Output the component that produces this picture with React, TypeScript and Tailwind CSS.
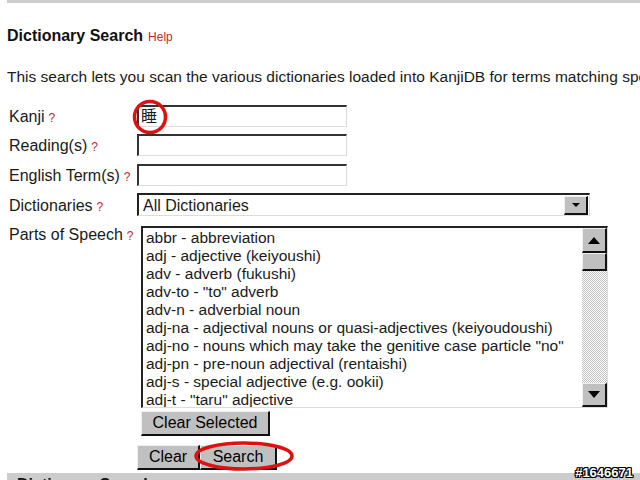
import React from 'react';

const partsOfSpeech = [
  'abbr - abbreviation',
  'adj - adjective (keiyoushi)',
  'adv - adverb (fukushi)',
  'adv-to - "to" adverb',
  'adv-n - adverbial noun',
  'adj-na - adjectival nouns or quasi-adjectives (keiyoudoushi)',
  'adj-no - nouns which may take the genitive case particle "no"',
  'adj-pn - pre-noun adjectival (rentaishi)',
  'adj-s - special adjective (e.g. ookii)',
  'adj-t - "taru" adjective',
];

function Q() {
  return <span className="text-[12px] text-[#c62828] ml-[4px]">?</span>;
}

function Label({ text }: { text: string }) {
  return (
    <div className="w-[137px] shrink-0 pl-[9px] pt-[3px] text-[16px] leading-[18px] text-[#1a1a1a] whitespace-nowrap">
      {text}
      <Q />
    </div>
  );
}

function TextBox({ value }: { value?: string }) {
  return (
    <div className="w-[210px] h-[22px] border-t-2 border-l-2 border-t-[#333] border-l-[#333] border-r border-b border-r-[#dcdcdc] border-b-[#dcdcdc] bg-white pl-[2px] text-[16px] leading-[19px] font-[family-name:Liberation_Sans,Noto_Sans_CJK_JP,sans-serif]">
      {value}
    </div>
  );
}

function ClassicButton({ children, className = '' }: { children: React.ReactNode; className?: string }) {
  return (
    <div
      className={
        'h-[25px] bg-[#c0c0c0] border-t border-l border-t-[#f0f0f0] border-l-[#f0f0f0] border-r-2 border-b-2 border-r-[#111] border-b-[#111] flex items-center justify-center text-[16px] text-black whitespace-nowrap ' +
        className
      }
    >
      {children}
    </div>
  );
}

function Arrow({ dir }: { dir: 'up' | 'down' }) {
  return (
    <svg width="12" height="7" viewBox="0 0 12 7">
      {dir === 'up' ? <polygon points="6,0 12,7 0,7" fill="#000" /> : <polygon points="0,0 12,0 6,7" fill="#000" />}
    </svg>
  );
}

export default function App() {
  return (
    <div className="relative w-[640px] h-[480px] overflow-hidden bg-white font-[family-name:Liberation_Sans,Arial,sans-serif] text-[#1a1a1a]">
      {/* top bar */}
      <div className="ml-[7px] h-[3px] bg-[#cccccc]" />

      {/* heading */}
      <div className="mt-[24px] pl-[7px] h-[18px] leading-[18px] whitespace-nowrap">
        <span className="text-[16px] font-bold text-[#111]">Dictionary Search</span>
        <span className="text-[12px] text-[#c62828] ml-[5px]">Help</span>
      </div>

      {/* intro */}
      <div className="mt-[23px] pl-[7px] h-[18px] leading-[18px] text-[15.5px] whitespace-nowrap overflow-hidden">
        This search lets you scan the various dictionaries loaded into KanjiDB for terms matching specific criteria.
      </div>

      {/* form */}
      <div className="mt-[19px] flex flex-col">
        <div className="flex items-center h-[22px]">
          <Label text="Kanji" />
          <TextBox value="睡" />
        </div>
        <div className="flex items-center h-[22px] mt-[7px]">
          <Label text="Reading(s)" />
          <TextBox />
        </div>
        <div className="flex items-center h-[22px] mt-[8px]">
          <Label text="English Term(s)" />
          <TextBox />
        </div>
        <div className="flex items-center h-[23px] mt-[7px]">
          <Label text="Dictionaries" />
          <div className="w-[453px] h-[23px] border-t-2 border-l-2 border-t-[#222] border-l-[#222] border-r border-b border-r-[#dcdcdc] border-b-[#dcdcdc] bg-white flex items-center justify-between">
            <span className="pl-[4px] text-[16px] leading-[19px]">All Dictionaries</span>
            <div className="w-[24px] h-[19px] mr-[1px] bg-[#c0c0c0] border-t border-l border-t-[#f0f0f0] border-l-[#f0f0f0] border-r-2 border-b-2 border-r-[#111] border-b-[#111] flex items-center justify-center">
              <svg width="8" height="4" viewBox="0 0 8 4">
                <polygon points="0,0 8,0 4,4" fill="#000" />
              </svg>
            </div>
          </div>
        </div>

        <div className="flex items-start mt-[10px]">
          <div className="-mt-[3px]">
            <Label text="Parts of Speech" />
          </div>
          <div className="ml-[4px] flex flex-col">
            <div className="w-[467px] h-[182px] border-t-2 border-l-2 border-t-[#222] border-l-[#222] border-r border-b border-r-[#dcdcdc] border-b-[#dcdcdc] bg-white flex overflow-hidden">
              <div className="flex-1 pl-[3px] pt-[1px] overflow-hidden">
                {partsOfSpeech.map((p) => (
                  <div key={p} className="h-[18px] leading-[18px] text-[15.5px] whitespace-nowrap">
                    {p}
                  </div>
                ))}
              </div>
              <div className="w-[25px] shrink-0 flex flex-col">
                <div className="h-[25px] bg-[#c0c0c0] border-t border-l border-t-[#f0f0f0] border-l-[#f0f0f0] border-r-2 border-b-2 border-r-[#111] border-b-[#111] flex items-center justify-center">
                  <Arrow dir="up" />
                </div>
                <div className="h-[18px] bg-[#c0c0c0] border-t border-l border-t-[#f0f0f0] border-l-[#f0f0f0] border-r-2 border-b-2 border-r-[#111] border-b-[#111]" />
                <div className="flex-1 bg-[repeating-conic-gradient(#c0c0c0_0_25%,#ffffff_0_50%)] bg-[length:2px_2px]" />
                <div className="h-[24px] bg-[#c0c0c0] border-t border-l border-t-[#f0f0f0] border-l-[#f0f0f0] border-r-2 border-b-2 border-r-[#111] border-b-[#111] flex items-center justify-center">
                  <Arrow dir="down" />
                </div>
              </div>
            </div>
            <ClassicButton className="w-[129px] mt-[3px]">Clear Selected</ClassicButton>
          </div>
        </div>

        <div className="flex mt-[9px] pl-[137px]">
          <ClassicButton className="w-[63px]">Clear</ClassicButton>
          <ClassicButton className="w-[77px]">Search</ClassicButton>
        </div>
      </div>

      {/* bottom bar */}
      <div className="absolute left-[7px] right-0 top-[473px] h-[10px] bg-[#cccccc] overflow-hidden">
        <div className="pl-[10px] pt-[3px] text-[16px] font-bold leading-[18px] text-[#111] whitespace-nowrap">Dictionary Search</div>
      </div>

      {/* annotations */}
      <svg className="absolute left-0 top-0 pointer-events-none" width="640" height="480">
        <circle cx="150" cy="117" r="15.5" fill="none" stroke="#dd1111" strokeWidth="3.5" />
        <ellipse cx="244" cy="456" rx="48" ry="13" fill="none" stroke="#dd1111" strokeWidth="3.5" />
      </svg>

      <div className="absolute right-[7px] top-[463px] text-[13px] font-bold text-white [text-shadow:1px_0_0_#000,-1px_0_0_#000,0_1px_0_#000,0_-1px_0_#000,1px_1px_0_#000,-1px_-1px_0_#000,1px_-1px_0_#000,-1px_1px_0_#000]">
        #1646671
      </div>
    </div>
  );
}
